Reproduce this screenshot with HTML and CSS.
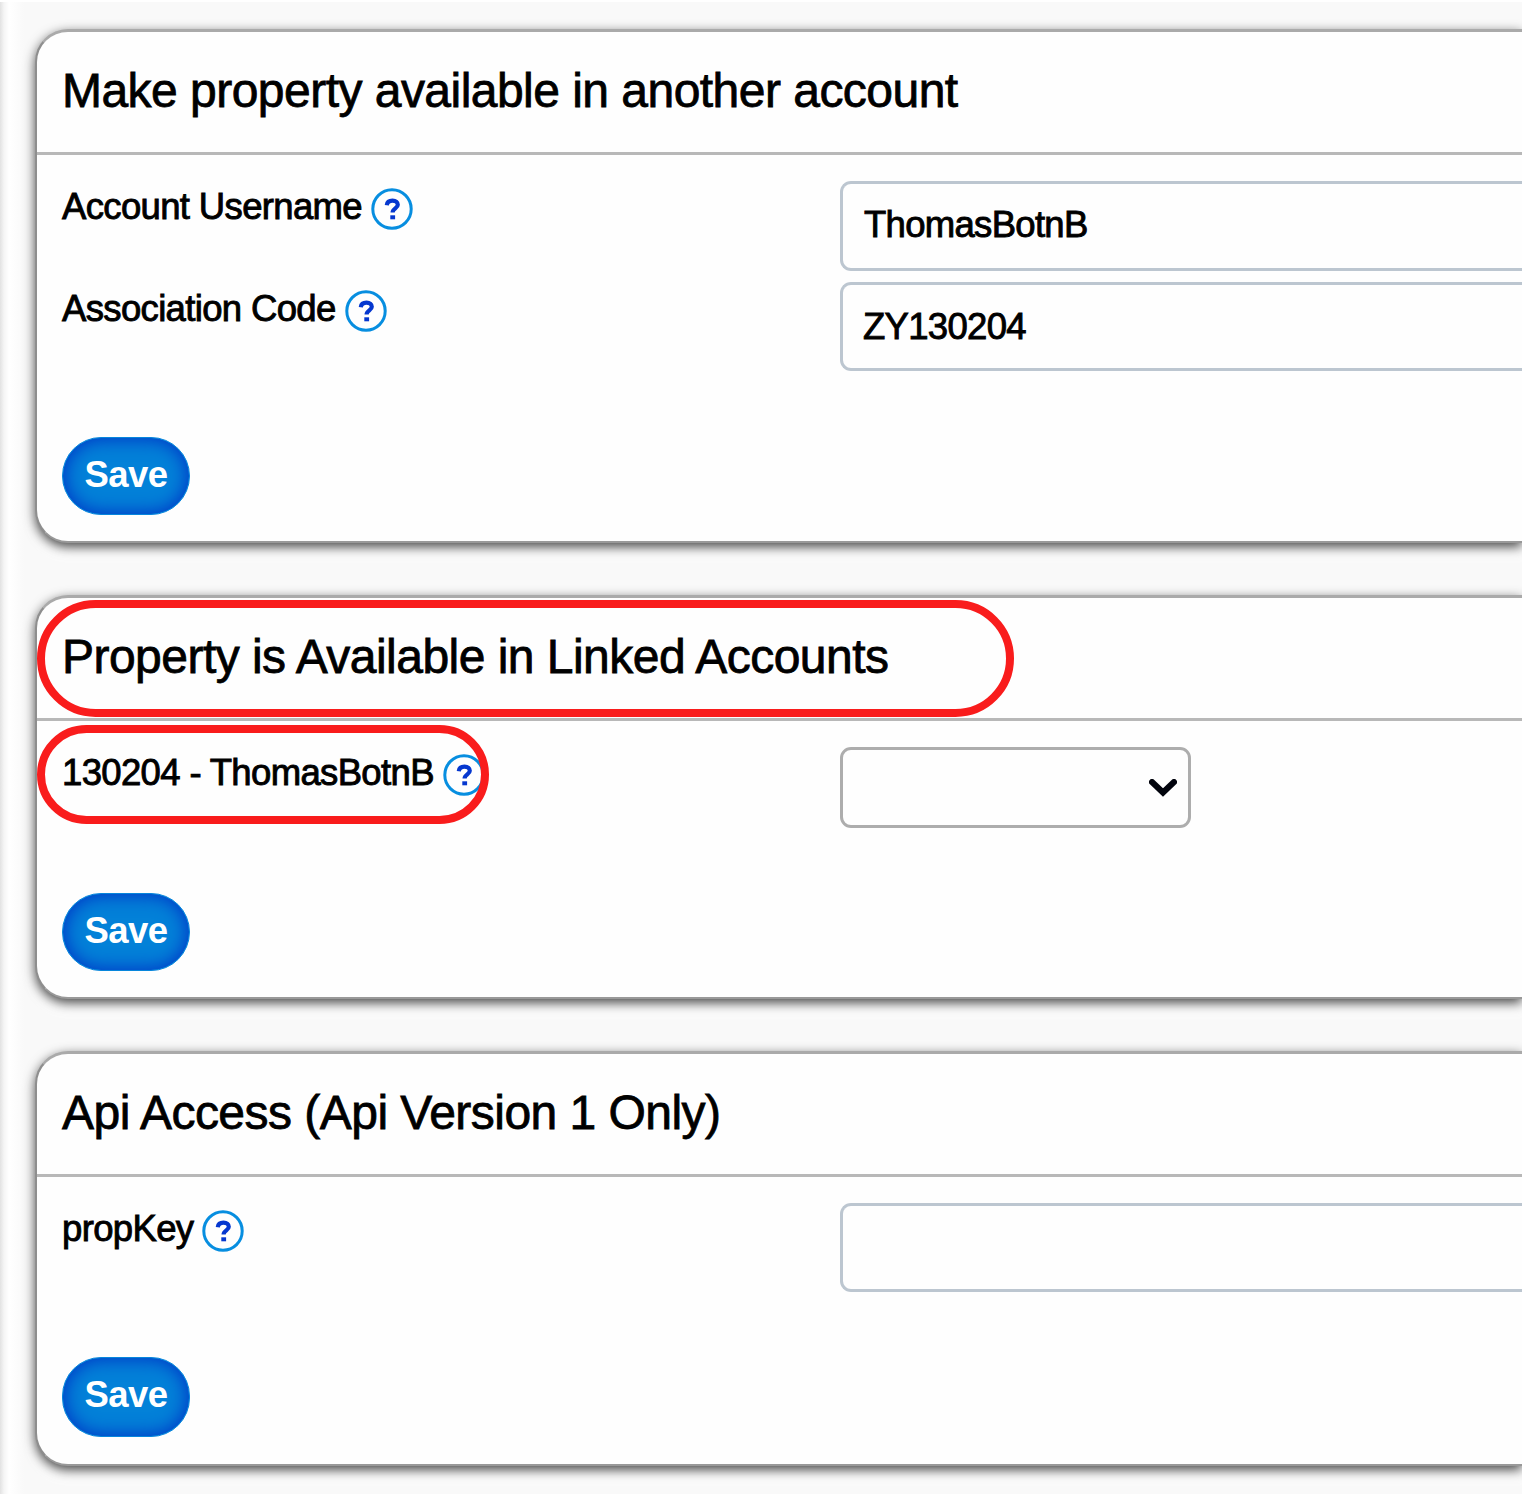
FILE: index.html
```html
<!DOCTYPE html>
<html lang="en">
<head>
<meta charset="utf-8">
<title>Property linking</title>
<link rel="stylesheet" href="styles.css">
</head>
<body>
<main class="page">
  <section class="card card-account">
    <h2 class="card-title"><span>Make property available in another account</span></h2>
    <div class="card-body">
      <div class="row row-first">
        <div class="label"><span>Account Username</span><svg class="help" viewBox="0 0 42 42"><circle cx="21" cy="21" r="19.2"/><path d="M15.8 17.2C16.2 13.8 18.6 12.7 21.5 12.7C25 12.7 26.8 14.5 26.8 16.8C26.8 20.4 21.6 20.5 21.6 24.6"/><rect x="19.3" y="27.3" width="4.8" height="4"/></svg></div>
        <div class="field">ThomasBotnB</div>
      </div>
      <div class="row">
        <div class="label label-low"><span>Association Code</span><svg class="help" viewBox="0 0 42 42"><circle cx="21" cy="21" r="19.2"/><path d="M15.8 17.2C16.2 13.8 18.6 12.7 21.5 12.7C25 12.7 26.8 14.5 26.8 16.8C26.8 20.4 21.6 20.5 21.6 24.6"/><rect x="19.3" y="27.3" width="4.8" height="4"/></svg></div>
        <div class="field field-short">ZY130204</div>
      </div>
      <button class="save">Save</button>
    </div>
  </section>

  <section class="card card-linked">
    <h2 class="card-title"><span>Property is Available in Linked Accounts</span></h2>
    <div class="card-body">
      <div class="row">
        <div class="label"><span>130204 - ThomasBotnB</span><svg class="help" viewBox="0 0 42 42"><circle cx="21" cy="21" r="19.2"/><path d="M15.8 17.2C16.2 13.8 18.6 12.7 21.5 12.7C25 12.7 26.8 14.5 26.8 16.8C26.8 20.4 21.6 20.5 21.6 24.6"/><rect x="19.3" y="27.3" width="4.8" height="4"/></svg></div>
        <div class="select"><svg class="chevron" viewBox="0 0 28 18"><path d="M3 3L14 13.500L25 3"/></svg></div>
      </div>
      <button class="save">Save</button>
    </div>
    <div class="callout callout-title"></div>
    <div class="callout callout-label"></div>
  </section>

  <section class="card card-api">
    <h2 class="card-title"><span>Api Access (Api Version 1 Only)</span></h2>
    <div class="card-body">
      <div class="row">
        <div class="label"><span>propKey</span><svg class="help" viewBox="0 0 42 42"><circle cx="21" cy="21" r="19.2"/><path d="M15.8 17.2C16.2 13.8 18.6 12.7 21.5 12.7C25 12.7 26.8 14.5 26.8 16.8C26.8 20.4 21.6 20.5 21.6 24.6"/><rect x="19.3" y="27.3" width="4.8" height="4"/></svg></div>
        <div class="field field-short"></div>
      </div>
      <button class="save save-tall">Save</button>
    </div>
  </section>
</main>
</body>
</html>
```
FILE: styles.css
```css
* { box-sizing: border-box; }

body {
  margin: 0;
  height: 1494px;
  overflow: hidden;
  font-family: "Liberation Sans", Arial, sans-serif;
  color: #000;
  background: #fff;
}

.page {
  height: 1494px;
  padding: 27px 0 0 35px;
  border-top: 2px solid #fff;
  background: linear-gradient(90deg, #e2e2e2 0, #f5f5f5 4px, #fff 9px, #fdfdfd 14px, #f9f9f9 24px);
}

.card {
  position: relative;
  margin-bottom: 52px;
  border: 3px solid #aaa;
  border-left: 2px solid #8e8e8e;
  border-bottom: 2px solid #999;
  border-right: 0;
  border-radius: 33px 0 0 33px;
  background: #fefefe;
  box-shadow: 0 4px 12px rgba(0, 0, 0, .72), 0 10px 12px 4px #fff;
}

.card-account { height: 514px; }
.card-linked { height: 404px; }
.card-api { height: 415px; }

.card-title {
  display: flex;
  align-items: center;
  height: 123px;
  margin: 0;
  padding: 0 0 4px 25px;
  border-bottom: 3px solid #b8b8b8;
  font-size: 48px;
  font-weight: 400;
  letter-spacing: -.53px;
  -webkit-text-stroke: .8px #000;
  white-space: nowrap;
}

.card-body {
  display: flex;
  flex-direction: column;
  align-items: flex-start;
  height: calc(100% - 123px);
  padding: 26px 0 26px 25px;
}

.card-api .card-body { padding-bottom: 27px; }

.row {
  display: grid;
  grid-template-columns: 778px 1fr;
  align-items: start;
  width: 100%;
}

.row-first { margin-bottom: 11px; }

.label {
  display: flex;
  align-items: center;
  gap: 9px;
  height: 42px;
  margin-top: 7px;
  font-size: 36.5px;
  letter-spacing: -.65px;
  -webkit-text-stroke: .9px #000;
  white-space: nowrap;
}

.label-low { margin-top: 8px; }
.label span { padding-bottom: 4px; }

.help { width: 42px; height: 42px; fill: none; }
.help circle { stroke: #078ee0; stroke-width: 3; }
.help path { stroke: #0537cf; stroke-width: 4.2; }
.help rect { fill: #0537cf; }

.field {
  display: flex;
  align-items: center;
  height: 90px;
  padding: 0 0 3px 21px;
  border: 3px solid #bcc6d0;
  border-right: 0;
  border-radius: 11px 0 0 11px;
  font-size: 36.5px;
  letter-spacing: -.7px;
  -webkit-text-stroke: .9px #000;
}

.field-short { height: 89px; padding: 0 0 0 20px; }

.select {
  display: flex;
  align-items: center;
  justify-content: flex-end;
  width: 351px;
  height: 81px;
  padding-right: 11px;
  border: 3px solid #adadad;
  border-radius: 11px;
}

.chevron { width: 28px; height: 18px; fill: none; stroke: #02040d; stroke-width: 6; stroke-linecap: round; }

.save {
  width: 128px;
  height: 78px;
  margin: auto 0 0;
  padding: 0 0 3px;
  border: 1px solid #0786dc;
  border-radius: 39px;
  background: #0381d8;
  box-shadow: inset 0 0 18px 2px #0039c6;
  color: #fff;
  font: 700 36.5px "Liberation Sans", Arial, sans-serif;
  letter-spacing: -.6px;
}

.save-tall { height: 80px; padding-bottom: 5px; }

/* Red highlights laid over the card */
.callout {
  position: absolute;
  border: 8px solid #f91c1c;
  pointer-events: none;
}

.callout-title { left: 0; top: 2px; width: 977px; height: 117px; border-radius: 59px; }
.callout-label { left: 0; top: 127px; width: 452px; height: 99px; border-radius: 50px; }
```
